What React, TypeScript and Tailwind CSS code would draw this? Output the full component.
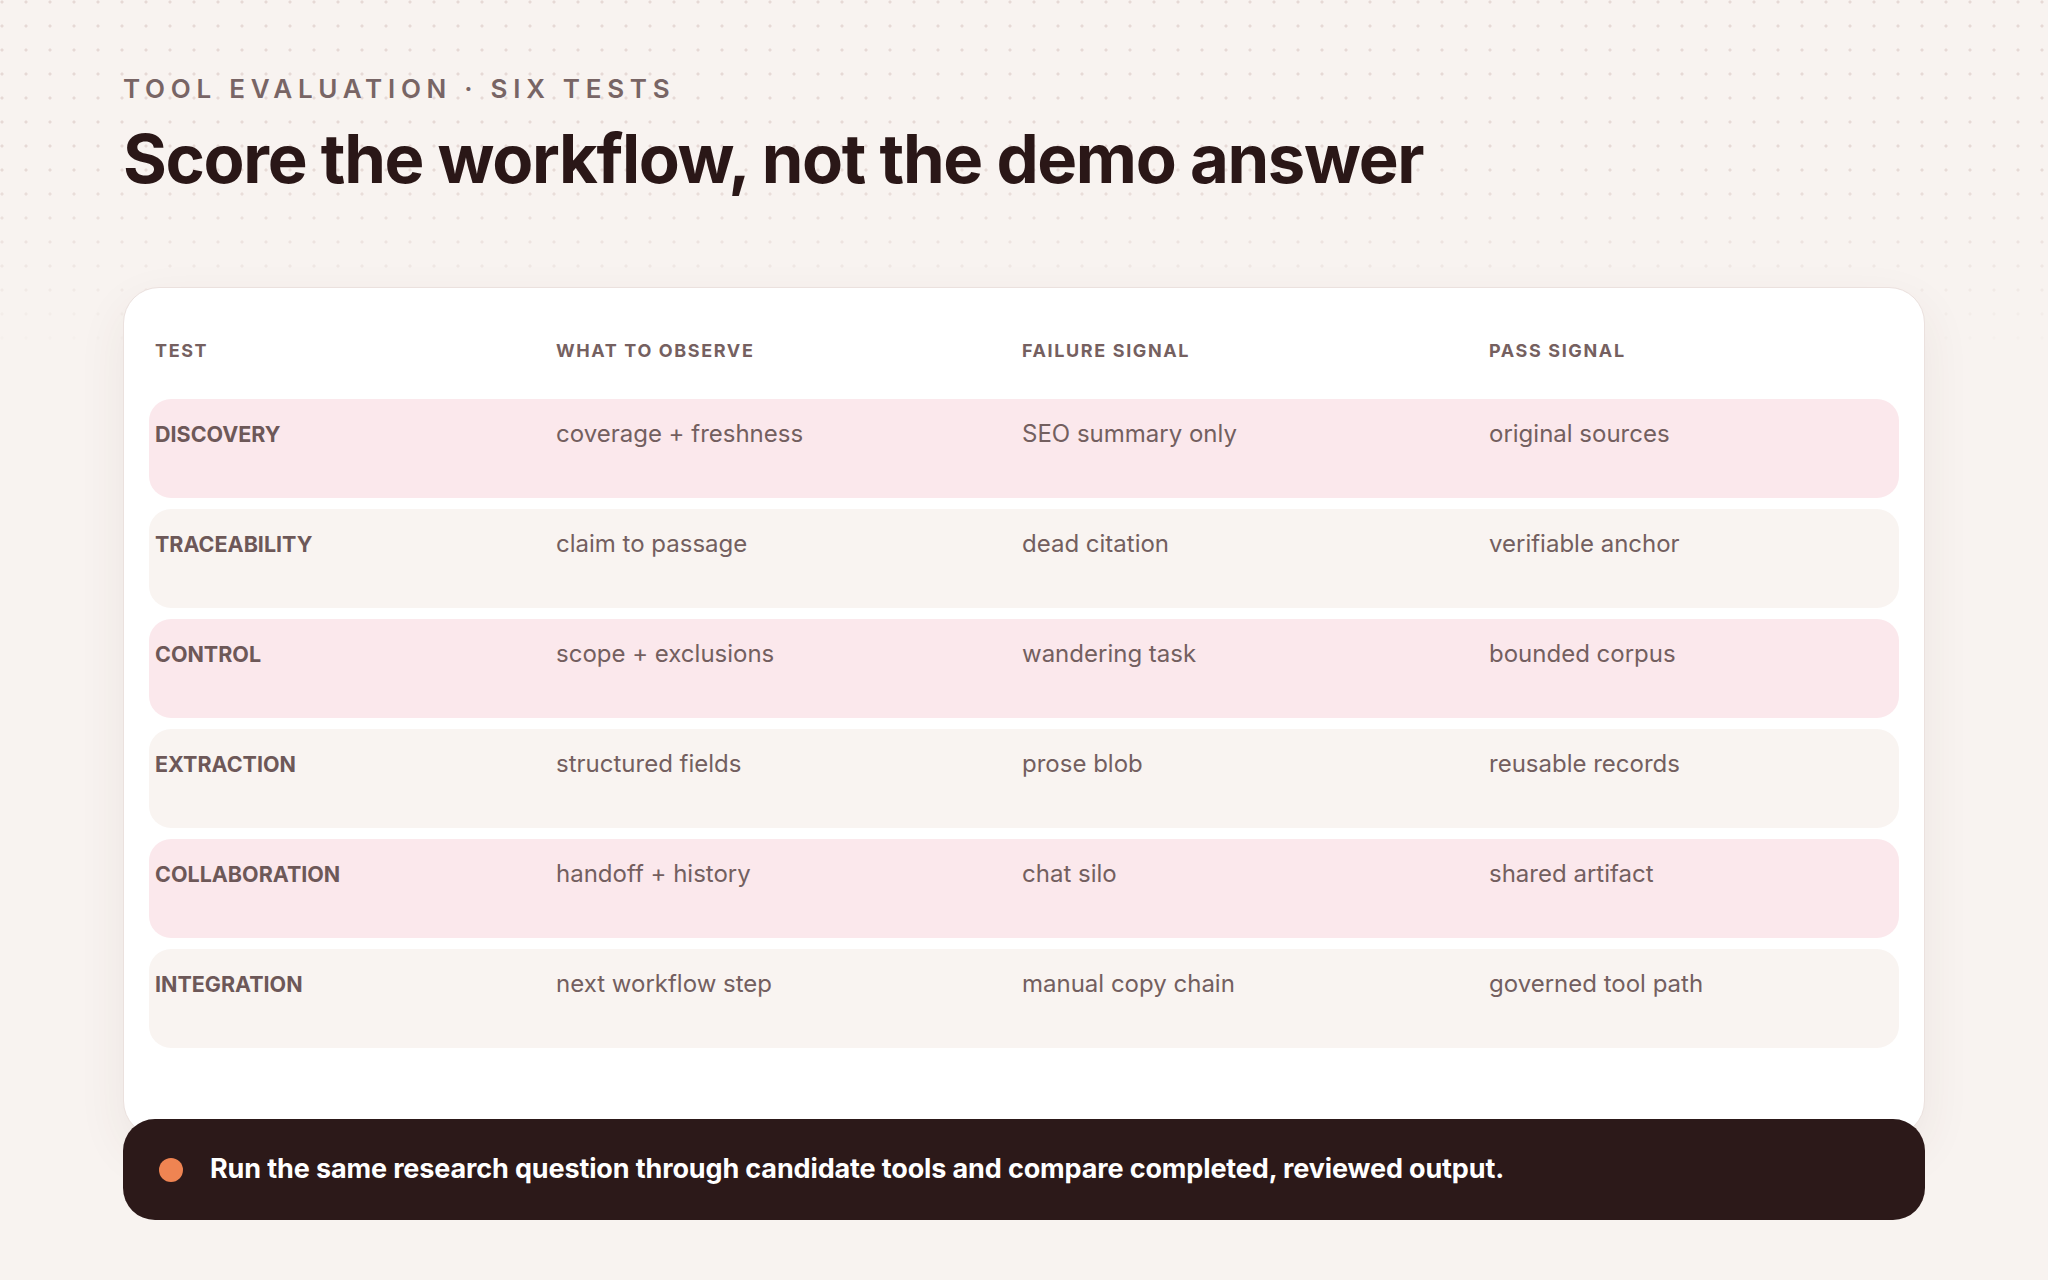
import React from 'react';

type Row = { test: string; observe: string; failure: string; pass: string };

const rows: Row[] = [
  { test: 'DISCOVERY', observe: 'coverage + freshness', failure: 'SEO summary only', pass: 'original sources' },
  { test: 'TRACEABILITY', observe: 'claim to passage', failure: 'dead citation', pass: 'verifiable anchor' },
  { test: 'CONTROL', observe: 'scope + exclusions', failure: 'wandering task', pass: 'bounded corpus' },
  { test: 'EXTRACTION', observe: 'structured fields', failure: 'prose blob', pass: 'reusable records' },
  { test: 'COLLABORATION', observe: 'handoff + history', failure: 'chat silo', pass: 'shared artifact' },
  { test: 'INTEGRATION', observe: 'next workflow step', failure: 'manual copy chain', pass: 'governed tool path' },
];

const cols = 'grid grid-cols-[401px_466px_467px_1fr]';

const App: React.FC = () => {
  return (
    <div className="relative min-h-screen w-full overflow-hidden bg-[#f8f3f0] font-['Inter','Liberation_Sans',sans-serif]">
      {/* dot grid, fading out downwards */}
      <div className="pointer-events-none absolute inset-0 bg-[radial-gradient(circle_at_2px_2px,#e6d9d5_1.3px,transparent_1.8px)] bg-[length:24px_24px] [mask-image:linear-gradient(to_bottom,black_0%,black_13%,transparent_28%)]" />

      <div className="relative px-[123px] pt-[76px]">
        <p className="text-[26px] font-semibold leading-none tracking-[0.22em] text-[#786565]">
          TOOL EVALUATION · SIX TESTS
        </p>
        <h1 className="mt-[23px] text-[67px] font-bold leading-none tracking-[-0.02em] text-[#2a1717]">
          Score the workflow, not the demo answer
        </h1>

        <div className="mt-[95px] rounded-[36px] border border-[#ebe1de] bg-white px-[25px] pt-[54px] pb-[88px] shadow-[0_18px_50px_rgba(90,50,45,0.07)]">
          <div className={`${cols} pl-[6px] text-[18px] font-bold leading-none tracking-[0.09em] text-[#756060]`}>
            <span>TEST</span>
            <span>WHAT TO OBSERVE</span>
            <span>FAILURE SIGNAL</span>
            <span>PASS SIGNAL</span>
          </div>

          <div className="mt-[39px] flex flex-col gap-[11px]">
            {rows.map((r, i) => (
              <div
                key={r.test}
                className={`${cols} h-[99px] rounded-[22px] pl-[6px] pt-[23px] text-[24px] leading-none text-[#735f5f] ${
                  i % 2 === 0 ? 'bg-[#fbe8ec]' : 'bg-[#f9f4f1]'
                }`}
              >
                <span className="pt-[2px] text-[21.5px] font-bold text-[#6d5858]">{r.test}</span>
                <span>{r.observe}</span>
                <span>{r.failure}</span>
                <span>{r.pass}</span>
              </div>
            ))}
          </div>
        </div>

        <div className="relative -mt-[18px] flex h-[101px] items-center gap-[27px] rounded-[32px] bg-[#2c1919] px-[36px]">
          <span className="h-[24px] w-[24px] shrink-0 rounded-full bg-[#ef8452]" />
          <p className="text-[27px] font-bold tracking-[-0.005em] text-white">
            Run the same research question through candidate tools and compare completed, reviewed output.
          </p>
        </div>
      </div>
    </div>
  );
};

export default App;
